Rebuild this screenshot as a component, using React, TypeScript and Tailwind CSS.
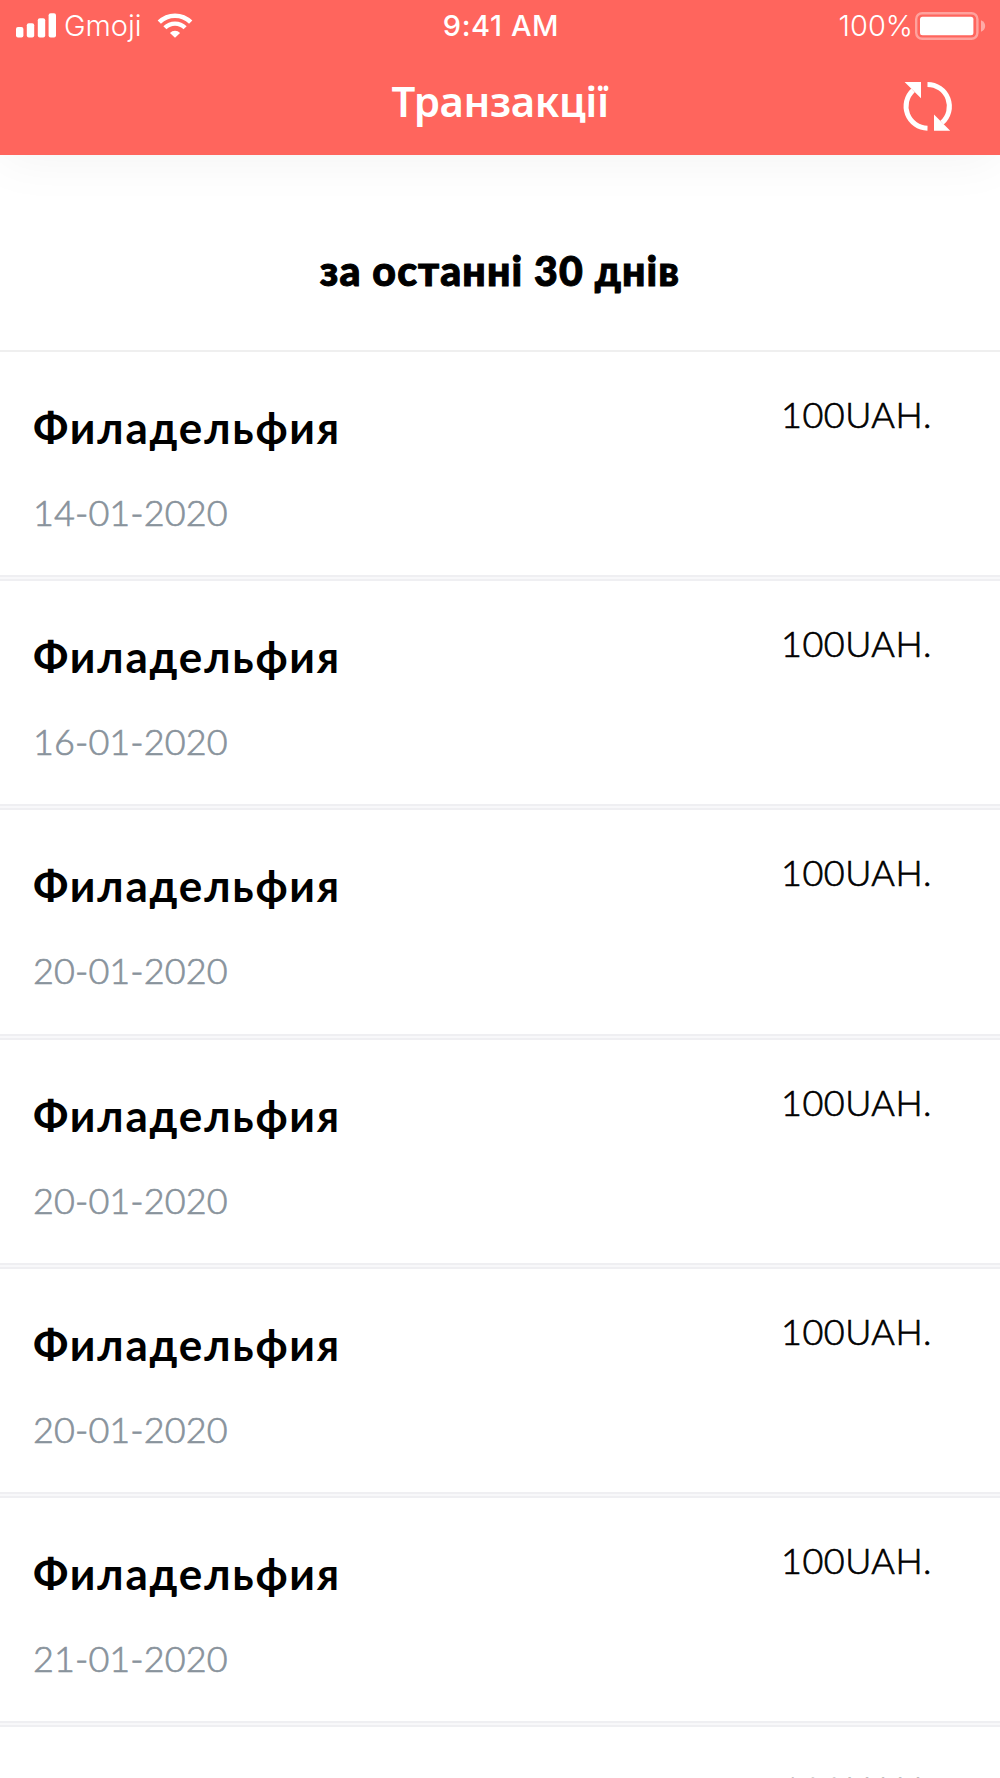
interface Transaction {
  id: number;
  title: string;
  date: string;
  amount: string;
}

const transactions: Transaction[] = [
  { id: 1, title: 'Филадельфия', date: '14-01-2020', amount: '100UAH.' },
  { id: 2, title: 'Филадельфия', date: '16-01-2020', amount: '100UAH.' },
  { id: 3, title: 'Филадельфия', date: '20-01-2020', amount: '100UAH.' },
  { id: 4, title: 'Филадельфия', date: '20-01-2020', amount: '100UAH.' },
  { id: 5, title: 'Филадельфия', date: '20-01-2020', amount: '100UAH.' },
  { id: 6, title: 'Филадельфия', date: '21-01-2020', amount: '100UAH.' },
  { id: 7, title: 'Филадельфия', date: '21-01-2020', amount: '100UAH.' },
];

function SignalIcon() {
  return (
    <svg width="40" height="26" viewBox="0 0 40 26" fill="currentColor">
      <rect x="0" y="14" width="7.4" height="10.5" rx="2" />
      <rect x="10.8" y="10.3" width="7.4" height="14.2" rx="2" />
      <rect x="21.8" y="5.3" width="7.4" height="19.2" rx="2" />
      <rect x="32.6" y="0.3" width="7.4" height="24.2" rx="2" />
    </svg>
  );
}

function WifiIcon() {
  return (
    <svg width="36" height="26" viewBox="0 0 36 26" fill="none" stroke="currentColor">
      <path d="M2.3 9.2a22.2 22.2 0 0 1 31.4 0" strokeWidth="4.6" />
      <path d="M7.9 14.8a14.3 14.3 0 0 1 20.2 0" strokeWidth="4.4" />
      <path d="M18 24.8L12.9 19.9a7.2 7.2 0 0 1 10.2 0z" fill="currentColor" stroke="none" />
    </svg>
  );
}

function BatteryIcon() {
  return (
    <svg width="71" height="28" viewBox="0 0 71 28" fill="none">
      <rect x="1.2" y="1.2" width="61.2" height="25.6" rx="6" stroke="white" strokeOpacity="0.4" strokeWidth="2.4" />
      <rect x="5" y="4.8" width="53.4" height="18.4" rx="2.5" fill="white" />
      <path d="M66 8.3c2.6 1 4.2 3.2 4.2 5.7s-1.6 4.7-4.2 5.7z" fill="white" fillOpacity="0.45" />
    </svg>
  );
}

function RefreshIcon() {
  return (
    <svg width="56" height="58" viewBox="0 0 56 58" fill="none">
      <path d="M27.5 50.2A21.9 21.9 0 0 1 13 12.3" stroke="white" strokeWidth="5" />
      <path d="M27.5 6.4A21.9 21.9 0 0 1 42 44.7" stroke="white" strokeWidth="5" />
      <path d="M4.6 4H21V20.2zM34 36.5V52.8H50.2z" fill="white" />
    </svg>
  );
}

function StatusBar() {
  return (
    <div className="grid h-[50px] grid-cols-3 items-center pr-[14px] pl-4 font-[Inter,sans-serif] text-[29px] leading-[50px] text-white">
      <div className="flex items-center">
        <SignalIcon />
        <span className="ml-[8px] pt-px font-light">Gmoji</span>
        <span className="ml-[15px]">
          <WifiIcon />
        </span>
      </div>
      <span className="pt-px text-center font-medium tracking-[0.6px]">9:41 AM</span>
      <div className="flex items-center justify-end">
        <span className="mr-[2px] pt-px font-light">100%</span>
        <BatteryIcon />
      </div>
    </div>
  );
}

function TransactionRow({ transaction }: { transaction: Transaction }) {
  return (
    <li className="flex h-[229.2px] shrink-0 flex-col">
      <div className="flex flex-1 justify-between pr-[68px] pl-[33px]">
        <div className="pt-[49px]">
          <h2 className="text-[44px] leading-[52px] font-bold tracking-[1.8px] text-black">
            {transaction.title}
          </h2>
          <p className="mt-[37px] text-[36px] leading-[44px] font-light tracking-[0.1px] text-[#89939c] [-webkit-text-stroke:0.7px_#89939c]">
            {transaction.date}
          </p>
        </div>
        <p className="pt-10 text-[36px] leading-[44px] font-light tracking-[0.5px] text-black [-webkit-text-stroke:0.7px_black]">
          {transaction.amount}
        </p>
      </div>
      <div className="h-[6px] border-y-2 border-[#efeff2] bg-[#f8f8fa]" />
    </li>
  );
}

export default function App() {
  return (
    <div className="flex h-[1778px] w-[1000px] flex-col overflow-hidden bg-white font-[Lato,sans-serif]">
      <header className="relative h-[154.5px] shrink-0 bg-[#ff655d] shadow-[0_4px_50px_rgba(0,0,0,0.05)]">
        <StatusBar />
        <div className="grid h-[104px] grid-cols-[100px_1fr_100px] items-center">
          <h1 className="col-start-2 pb-[3px] text-center font-['Noto_Sans',sans-serif] text-[42px] leading-[60px] font-semibold tracking-[-0.4px] text-white">
            Транзакції
          </h1>
          <button type="button" aria-label="refresh" className="flex pt-[10px]">
            <RefreshIcon />
          </button>
        </div>
      </header>

      {/* Period */}
      <div className="h-[197.5px] shrink-0 border-b-2 border-[#efefef] pt-[91px] text-center text-[41px] leading-[50px] font-black tracking-[1.1px] text-black [-webkit-text-stroke:1px_black]">
        за останні 30 днів
      </div>

      <ul className="flex flex-col">
        {transactions.map((t) => (
          <TransactionRow key={t.id} transaction={t} />
        ))}
      </ul>
    </div>
  );
}
